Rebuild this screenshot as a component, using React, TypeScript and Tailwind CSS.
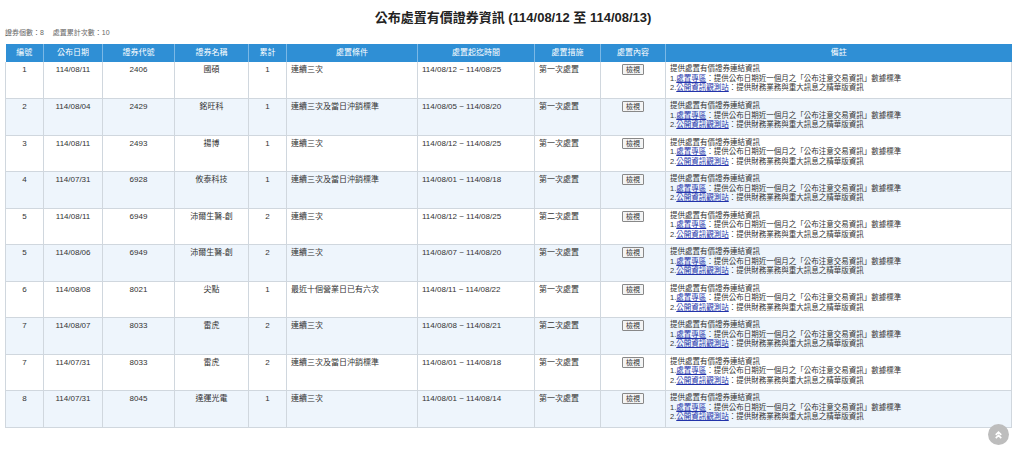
import React from "react";

const rows = [
  ["1","114/08/11","2406","國碩","1","連續三次","114/08/12 ~ 114/08/25","第一次處置"],
  ["2","114/08/04","2429","銘旺科","1","連續三次及當日沖銷標準","114/08/05 ~ 114/08/20","第一次處置"],
  ["3","114/08/11","2493","揚博","1","連續三次","114/08/12 ~ 114/08/25","第一次處置"],
  ["4","114/07/31","6928","攸泰科技","1","連續三次及當日沖銷標準","114/08/01 ~ 114/08/18","第一次處置"],
  ["5","114/08/11","6949","沛爾生醫-創","2","連續三次","114/08/12 ~ 114/08/25","第二次處置"],
  ["5","114/08/06","6949","沛爾生醫-創","2","連續三次","114/08/07 ~ 114/08/20","第一次處置"],
  ["6","114/08/08","8021","尖點","1","最近十個營業日已有六次","114/08/11 ~ 114/08/22","第一次處置"],
  ["7","114/08/07","8033","雷虎","2","連續三次","114/08/08 ~ 114/08/21","第二次處置"],
  ["7","114/07/31","8033","雷虎","2","連續三次及當日沖銷標準","114/08/01 ~ 114/08/18","第一次處置"],
  ["8","114/07/31","8045","達運光電","1","連續三次","114/08/01 ~ 114/08/14","第一次處置"],
];
const heads = ["編號","公布日期","證券代號","證券名稱","累計","處置條件","處置起迄時間","處置措施","處置內容","備註"];
const widths = [38,59,72,74,38,131,117,66,65,346];

export default function App() {
  return (
    <div className="w-[1024px] h-[451px] bg-white relative overflow-hidden" style={{fontFamily:'"Liberation Sans","Noto Sans CJK TC",sans-serif'}}>
      <div className="text-center font-bold text-[13px] text-[#222] pt-[8px] h-[26px] pl-[2px]">公布處置有價證券資訊 (114/08/12 至 114/08/13)</div>
      <div className="text-[7px] text-[#666] pl-[5px] h-[18px] leading-[14px]">證券個數：8　&nbsp;處置累計次數：10</div>
      <table className="ml-[5px] border-collapse text-[8px] text-[#333] table-fixed" style={{width:1007}}>
        <colgroup>{widths.map((w,i)=><col key={i} style={{width:w}}/>)}</colgroup>
        <thead>
          <tr className="bg-[#2f8fd5] text-white h-[18px]">
            {heads.map((h,i)=><th key={i} className="font-normal text-[8px] border-l border-[#7bb8e6] first:border-l-0">{h}</th>)}
          </tr>
        </thead>
        <tbody>
          {rows.map((r,ri)=>(
            <tr key={ri} className={`h-[36.5px] align-top border-b border-[#d0d7de] ${ri%2? "bg-[#eef5fc]":"bg-white"}`}>
              {r.map((c,ci)=>(
                <td key={ci} className={`border-x border-[#d0d7de] pt-[3px] leading-[10px] ${ci===5||ci===6||ci===7?"text-left pl-[4px]":"text-center"}`}>{c}</td>
              ))}
              <td className="border-x border-[#d0d7de] text-center pt-[2px]">
                <span className="inline-block border border-[#888] bg-[#f4f4f4] px-[3px] leading-[9px] text-[7px] rounded-[1px]">檢視</span>
              </td>
              <td className="border-x border-[#d0d7de] pl-[4px] pt-[2px] leading-[9.5px] text-[7.5px]">
                <div>提供處置有價證券連結資訊</div>
                <div>1.<span className="text-[#2233aa] underline">處置專區</span>：提供公布日期近一個月之「公布注意交易資訊」數據標準</div>
                <div>2.<span className="text-[#2233aa] underline">公開資訊觀測站</span>：提供財務業務與重大訊息之精華版資訊</div>
              </td>
            </tr>
          ))}
        </tbody>
      </table>
      <div className="absolute left-[988px] top-[424px] w-[21px] h-[21px] rounded-full bg-[#bdbdbd] flex items-center justify-center">
        <svg width="11" height="11" viewBox="0 0 12 12" fill="none" stroke="white" strokeWidth="1.8"><path d="M3 6.5l3-3 3 3M3 10l3-3 3 3"/></svg>
      </div>
    </div>
  );
}
